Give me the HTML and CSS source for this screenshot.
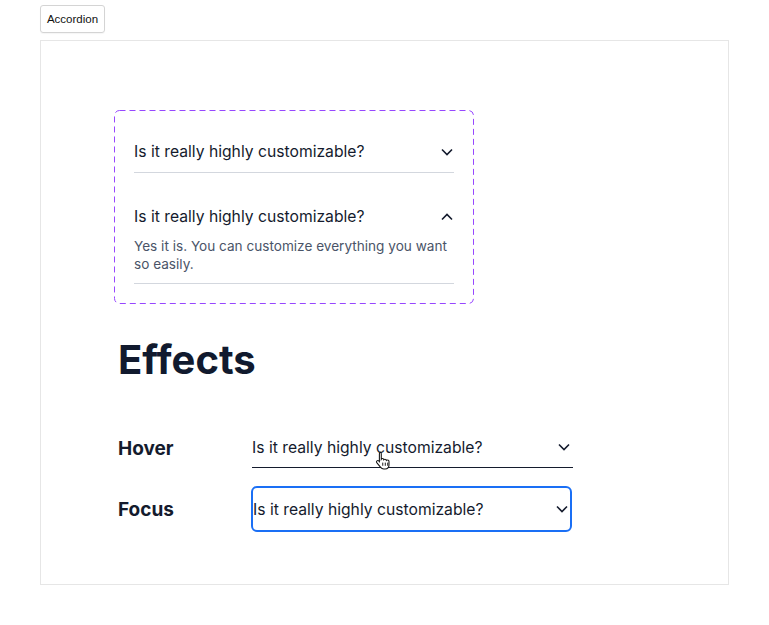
FILE: index.html
```html
<!DOCTYPE html>
<html>
<head>
<meta charset="utf-8">
<link rel="stylesheet" href="styles.css">
</head>
<body>
<div class="tab">Accordion</div>
<div class="frame">
  <div class="accordion">
    <svg class="dash" width="100%" height="100%"><rect x="0.5" y="0.5" width="359" height="193" rx="5" ry="5" fill="none" stroke="#9747ff" stroke-width="1" stroke-dasharray="6 4"/></svg>
    <div class="item">
      <div class="header">
        <span>Is it really highly customizable?</span>
        <svg class="chev" width="12" height="8" viewBox="0 0 12 8"><path d="M1 1.5 L6 6.5 L11 1.5" fill="none" stroke="#141b2d" stroke-width="1.6"/></svg>
      </div>
    </div>
    <div class="item">
      <div class="header">
        <span>Is it really highly customizable?</span>
        <svg class="chev" width="12" height="8" viewBox="0 0 12 8"><path d="M1 6.5 L6 1.5 L11 6.5" fill="none" stroke="#141b2d" stroke-width="1.6"/></svg>
      </div>
      <div class="content">Yes it is. You can customize everything you want so easily.</div>
    </div>
  </div>

  <h1 class="title">Effects</h1>

  <div class="row row-hover">
    <div class="label">Hover</div>
    <div class="field hover">
      <span>Is it really highly customizable?</span>
      <svg class="chev" width="12" height="8" viewBox="0 0 12 8"><path d="M1 1.5 L6 6.5 L11 1.5" fill="none" stroke="#141b2d" stroke-width="1.6"/></svg>
      <svg class="cursor" width="17" height="19" viewBox="0 0 16 18"><path d="M4.5 1.2c.8 0 1.4.6 1.4 1.4v5.2c.3-.5.8-.7 1.3-.6.6.1 1 .6 1.1 1.1.3-.4.8-.6 1.3-.5.6.1 1 .6 1.1 1.1.3-.3.8-.5 1.3-.4.7.1 1.2.7 1.2 1.4v3.4c0 2.1-1.6 3.7-3.7 3.7H8.2c-1.2 0-2.2-.6-2.9-1.5L1.6 11c-.4-.6-.3-1.3.2-1.7.5-.4 1.2-.4 1.7.1l.6.7V2.6c0-.8.6-1.4 1.4-1.4z" fill="#fff" stroke="#111" stroke-width="1"/><path d="M7.3 11v3M9.7 11v3M12 11v3" stroke="#111" stroke-width="0.9"/></svg>
    </div>
  </div>
  <div class="row row-focus">
    <div class="label">Focus</div>
    <div class="field focus">
      <span>Is it really highly customizable?</span>
      <svg class="chev" width="12" height="8" viewBox="0 0 12 8"><path d="M1 1.5 L6 6.5 L11 1.5" fill="none" stroke="#141b2d" stroke-width="1.6"/></svg>
    </div>
  </div>
</div>
</body>
</html>
```

FILE: styles.css
```css
html, body {
  margin: 0;
  padding: 0;
  background: #fff;
}
body {
  font-family: Inter, "Noto Sans", sans-serif;
  color: #141b2d;
  padding-top: 5px;
}
.tab {
  margin: 0 0 0 40px;
  width: 65px;
  height: 28px;
  box-sizing: border-box;
  border: 1px solid #d4d4d4;
  border-radius: 3px;
  font-family: "Liberation Sans", Arial, sans-serif;
  font-size: 11.5px;
  line-height: 26px;
  text-align: center;
  color: #111;
  box-shadow: 0 1px 1px rgba(0,0,0,0.04);
}
.frame {
  margin: 7px 0 0 40px;
  width: 689px;
  height: 545px;
  box-sizing: border-box;
  border: 1px solid #e6e6e6;
  padding: 69px 0 0 73px;
}
.accordion {
  position: relative;
  width: 360px;
  box-sizing: border-box;
  border-radius: 5px;
  padding: 20px 20px;
  display: flex;
  flex-direction: column;
  gap: 22px;
}
.dash {
  position: absolute;
  left: 0;
  top: 0;
}
.item {
  border-bottom: 1px solid #d3d7de;
}
.header {
  display: flex;
  align-items: center;
  justify-content: space-between;
  font-size: 15.7px;
  line-height: 24px;
  padding: 10px 0 8px;
}
.chev {
  margin-right: 1px;
}
.content {
  font-size: 13.6px;
  line-height: 18px;
  color: #4a5468;
  margin-top: 0;
  padding-bottom: 10px;
  padding-right: 2px;
}
.title {
  margin: 32px 0 0 4px;
  font-size: 40px;
  line-height: 48px;
  font-weight: 700;
  color: #111a2e;
}
.row {
  display: flex;
  align-items: center;
  margin-left: 4px;
}
.row-hover {
  margin-top: 44px;
}
.row-focus {
  margin-top: 18px;
}
.label {
  width: 134px;
  font-size: 19px;
  font-weight: 700;
  color: #141b2d;
}
.field {
  position: relative;
  width: 321px;
  height: 46px;
  box-sizing: border-box;
  display: flex;
  align-items: center;
  justify-content: space-between;
  font-size: 15.7px;
}
.hover {
  height: 40px;
  border-bottom: 1px solid #141b2d;
}
.hover .chev {
  margin-right: 3px;
  margin-bottom: 1px;
}
.focus {
  border: 2px solid #1a6ff5;
  border-radius: 6px;
  padding: 0 2px 0 0;
  margin-left: -1px;
}
.focus .chev {
  margin-right: 0;
}
.cursor {
  position: absolute;
  left: 123px;
  top: 23px;
}
```
